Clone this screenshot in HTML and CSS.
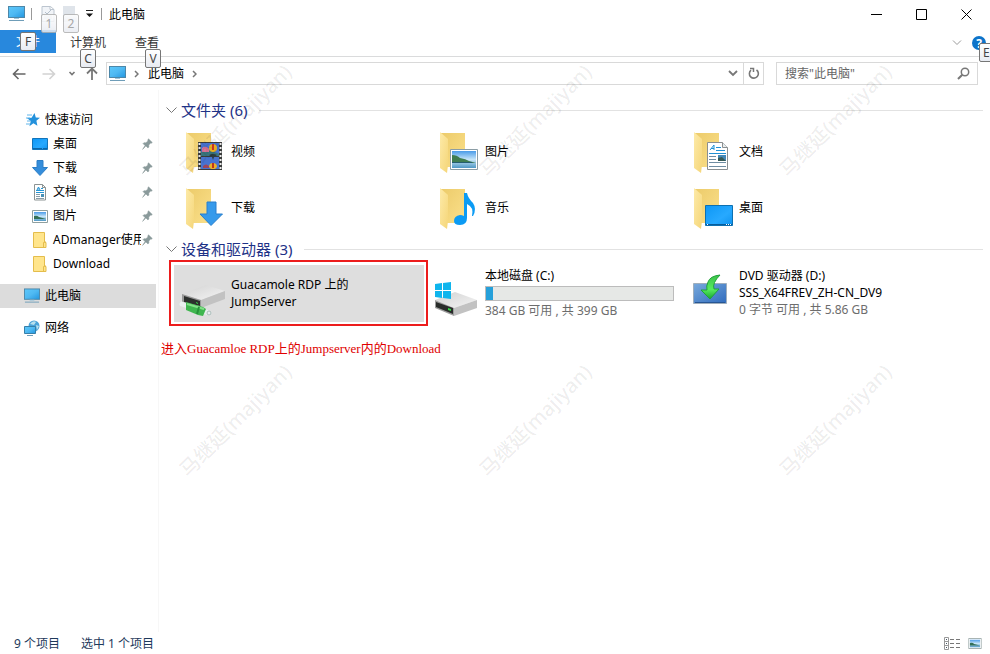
FILE: index.html
```html
<!DOCTYPE html>
<html lang="zh-CN">
<head>
<meta charset="utf-8">
<title>此电脑</title>
<link rel="stylesheet" href="styles.css">
</head>
<body>
<svg class="defs" aria-hidden="true">
  <defs>
    <linearGradient id="screen" x1="0" y1="0" x2="1" y2="1"><stop offset="0" stop-color="#5cc8fb"/><stop offset=".5" stop-color="#4fb9f2"/><stop offset="1" stop-color="#2296e0"/></linearGradient>
    <linearGradient id="back" x1="0" y1="0" x2="1" y2="1"><stop offset="0" stop-color="#eccb6a"/><stop offset="1" stop-color="#fbe08b"/></linearGradient>
    <linearGradient id="flap" x1="0" y1="0" x2="1" y2="1"><stop offset="0" stop-color="#fdeaa8"/><stop offset="1" stop-color="#f5d679"/></linearGradient>
    <linearGradient id="desk" x1="0" y1="0" x2="1" y2="1"><stop offset="0" stop-color="#0d97f5"/><stop offset=".6" stop-color="#27a9ff"/><stop offset="1" stop-color="#0e93ef"/></linearGradient>
    <linearGradient id="metal" x1="0" y1="0" x2="1" y2="1"><stop offset="0" stop-color="#d2d2d2"/><stop offset="1" stop-color="#f4f4f4"/></linearGradient>
    <linearGradient id="sky" x1="0" y1="0" x2="0" y2="1"><stop offset="0" stop-color="#4a9be8"/><stop offset=".5" stop-color="#c6e5f8"/><stop offset="1" stop-color="#4e97c4"/></linearGradient>
    <linearGradient id="green" x1="0" y1="0" x2="0" y2="1"><stop offset="0" stop-color="#3cc24a"/><stop offset=".6" stop-color="#57ec5e"/><stop offset="1" stop-color="#17a632"/></linearGradient>
    <linearGradient id="dvd" x1="0" y1="0" x2="1" y2="1"><stop offset="0" stop-color="#78a9dc"/><stop offset="1" stop-color="#2f6bbd"/></linearGradient>
    <symbol id="pc" viewBox="0 0 17 16"><rect x=".5" y=".5" width="16" height="11" fill="url(#screen)" stroke="#4d87a8"/><path d="M6 12h5v1H6z" fill="#9fc6db"/><path d="M1 14.5h15" stroke="#6f9db8"/></symbol>
    <symbol id="pin" viewBox="0 0 11 12"><path d="M6.5.8l3.8 3.7-1 .7-.7-.1-1.8 2 .1 2-1 .8-2-2L.6 11.4l2.4-3.8-2-2 .9-.9 2 .1 2-1.9-.1-.9z" fill="#8a9a9b" stroke="#8a9a9b" stroke-width=".5"/></symbol>
    <symbol id="folder" viewBox="0 0 38 41"><path d="M1 1h24v34H1z" fill="url(#back)"/><path d="M0 0l8 7v26l-1 8-7-5z" fill="url(#flap)"/></symbol>
    <symbol id="mini" viewBox="0 0 14 16"><path d="M.5.5h11v10l1.500 0v5H.5z" fill="#ffe58c" stroke="#e4bd4c"/><path d="M10.500 15v-4.500l2-1" fill="none" stroke="#e4bd4c"/></symbol>
    <symbol id="doc" viewBox="0 0 14 17"><path d="M1.500.5h8l3 3v12.500h-11z" fill="#fff" stroke="#8b9393"/><path d="M9.500.5v3h3" fill="none" stroke="#8b9393"/><path d="M4 6l1.500-3L7 6M4.500 5h2M8 4.500h2M3 6.500h8M3 8.500h8" fill="none" stroke="#2695d4"/><path d="M3 10.500h4M3 12.500h4M3 14.500h8" stroke="#879ca8"/><path d="M8 10h3v3H8z" fill="#4990b5"/></symbol>
    <symbol id="photo" viewBox="0 0 16 13"><path d="M.5.5h15v12H.5z" fill="#fff" stroke="#8f9f9f"/><path d="M2 2h12v9H2z" fill="url(#sky)"/><path d="M2 6q3-1 5 1l7 2H2z" fill="#347057"/></symbol>
  </defs>
</svg>

<header class="titlebar">
  <svg class="app" width="17" height="16"><use href="#pc"/></svg>
  <span class="sep"></span>
  <button class="quick" aria-label="属性"><svg width="14" height="16" viewBox="0 0 14 16"><path d="M1 .5h8.500l3.500 3v12H1zM9 .5v3h4" fill="#f1f4f8" stroke="#bcc5cf"/><path d="M4 6l2 2 4-4M3 10h8M3 12h8" fill="none" stroke="#b4bfca"/></svg><kbd class="tip dim">1</kbd></button>
  <button class="quick" aria-label="新建文件夹"><svg width="14" height="16" viewBox="0 0 14 16"><path d="M0 0h12v9h2v7H0z" fill="#dfe4ea"/></svg><kbd class="tip dim">2</kbd></button>
  <button class="more" aria-label="自定义"><svg width="9" height="8" viewBox="0 0 9 8"><path d="M1 .5h7" stroke="#222"/><path d="M1 3.500h7L4.500 7z" fill="#111"/></svg></button>
  <span class="sep"></span>
  <h1>此电脑</h1>
  <div class="window">
    <button aria-label="最小化"><svg width="11" height="11"><path d="M0 5.500h11" stroke="#000"/></svg></button>
    <button aria-label="最大化"><svg width="11" height="11"><path d="M.5.5h10v10H.5z" fill="none" stroke="#000"/></svg></button>
    <button aria-label="关闭"><svg width="11" height="11"><path d="M.5.5l10 10m0-10l-10 10" stroke="#000"/></svg></button>
  </div>
</header>

<nav class="tabs">
  <button class="tab file">文件<kbd class="tip">F</kbd></button>
  <button class="tab">计算机<kbd class="tip low">C</kbd></button>
  <button class="tab">查看<kbd class="tip low">V</kbd></button>
  <div class="help">
    <svg width="10" height="6" viewBox="0 0 10 6"><path d="M1 .5l4 4 4-4" fill="none" stroke="#999"/></svg>
    <button class="question" aria-label="帮助">?<kbd class="tip edge">E</kbd></button>
  </div>
</nav>

<div class="address">
  <button class="nav" aria-label="后退"><svg width="14" height="12" viewBox="0 0 14 12"><path d="M13.500 6H1.500M6.500 1l-5 5 5 5" fill="none" stroke="#666" stroke-width="1.600"/></svg></button>
  <button class="nav" aria-label="前进"><svg width="14" height="12" viewBox="0 0 14 12"><path d="M.5 6h12M7.500 1l5 5-5 5" fill="none" stroke="#d2d2d2" stroke-width="1.600"/></svg></button>
  <button class="nav recent" aria-label="最近浏览"><svg width="8" height="6" viewBox="0 0 8 6"><path d="M1.500 1L4 3.500 6.500 1" fill="none" stroke="#777" stroke-width="1.600"/></svg></button>
  <button class="nav up" aria-label="上移"><svg width="12" height="13" viewBox="0 0 12 13"><path d="M6 13V1.500M1 6.500l5-5 5 5" fill="none" stroke="#777" stroke-width="1.800"/></svg></button>
  <div class="path">
    <svg width="17" height="16"><use href="#pc"/></svg>
    <svg class="arrow" width="5" height="8" viewBox="0 0 5 8"><path d="M1 1l3 3-3 3" fill="none" stroke="#777" stroke-width="1.500"/></svg>
    <a href="#">此电脑</a>
    <svg class="arrow" width="5" height="8" viewBox="0 0 5 8"><path d="M1 1l3 3-3 3" fill="none" stroke="#777" stroke-width="1.500"/></svg>
    <button class="drop" aria-label="历史"><svg width="10" height="7" viewBox="0 0 10 7"><path d="M1 1l4 4 4-4" fill="none" stroke="#777" stroke-width="1.800"/></svg></button>
    <button class="refresh" aria-label="刷新"><svg width="12" height="13" viewBox="0 0 12 13"><path d="M8.500 3A4.500 4.500 0 1 1 3 3.200" fill="none" stroke="#777" stroke-width="1.600"/><path d="M2 1.500h3.500V5" fill="none" stroke="#777" stroke-width="1.500"/></svg></button>
  </div>
  <form class="search">
    <input type="text" aria-label="搜索" placeholder="搜索&quot;此电脑&quot;">
    <svg width="13" height="13" viewBox="0 0 13 13"><circle cx="8" cy="5" r="3.700" fill="none" stroke="#777" stroke-width="1.500"/><path d="M5.300 7.700L1 12" stroke="#777" stroke-width="2"/></svg>
  </form>
</div>

<div class="body">
  <aside class="sidebar">
    <ul>
      <li><a href="#"><svg width="16" height="16" viewBox="0 0 16 16"><path d="M10.500 1l1.300 4.500 4.200.3-3.600 3 1 5-4-2.500-4 3 1.400-5L3 6l4.600-.3z" fill="#2391dc"/><path d="M3 3h5M2 6h4M3 9h4M2 12h4" stroke="#61b5ea"/></svg><span>快速访问</span></a></li>
      <li class="sub"><a href="#"><svg width="16" height="16" viewBox="0 0 16 16"><path d="M.5 2.500h15v11H.5z" fill="url(#desk)" stroke="#1274ba"/><path d="M1 12.500h14" stroke="#0b66a8" stroke-dasharray="9 1"/></svg><span>桌面</span></a><svg class="pin" width="11" height="12"><use href="#pin"/></svg></li>
      <li class="sub"><a href="#"><svg width="16" height="16" viewBox="0 0 16 16"><path d="M5 .5h6v7h4.500L8 15.500.5 7.500H5z" fill="#348ddb" stroke="#2c7ec6"/></svg><span>下载</span></a><svg class="pin" width="11" height="12"><use href="#pin"/></svg></li>
      <li class="sub"><a href="#"><svg width="16" height="17"><use href="#doc"/></svg><span>文档</span></a><svg class="pin" width="11" height="12"><use href="#pin"/></svg></li>
      <li class="sub"><a href="#"><svg width="16" height="13"><use href="#photo"/></svg><span>图片</span></a><svg class="pin" width="11" height="12"><use href="#pin"/></svg></li>
      <li class="sub"><a href="#"><svg width="16" height="16"><use href="#mini"/></svg><span>ADmanager使用</span></a><svg class="pin" width="11" height="12"><use href="#pin"/></svg></li>
      <li class="sub"><a href="#"><svg width="16" height="16"><use href="#mini"/></svg><span>Download</span></a></li>
      <li class="root current"><a href="#"><svg width="16" height="16"><use href="#pc"/></svg><span>此电脑</span></a></li>
      <li class="root"><a href="#"><svg width="16" height="16" viewBox="0 0 16 16"><circle cx="10" cy="6" r="5.500" fill="#4aa3d8"/><path d="M6 4q3-4 6-2l-2 3zM12 5l3 1-2 4z" fill="#b7e0ee"/><path d="M.5 6.500h11v7H.5z" fill="url(#screen)" stroke="#367fa9"/><path d="M3 15.500h6" stroke="#6f9db8"/></svg><span>网络</span></a></li>
    </ul>
  </aside>

  <main class="content">
    <section>
      <h2><svg width="11" height="7" viewBox="0 0 11 7"><path d="M.5.5l5 5 5-5" fill="none" stroke="#777"/></svg>文件夹 (6)</h2>
      <div class="grid">
        <a class="tile" href="#"><svg width="57" height="56" viewBox="0 0 57 56"><use href="#folder" x="12" y="8" width="38" height="41"/><path d="M24 18h24v28H24z" fill="#3b3d3c"/><path d="M27 19h18v13H27zM27 33h18v12H27z" fill="#4773cf"/><path d="M27 28q7-4 18 2v2H27z" fill="#39747c"/><path d="M28 24q4-3 7 1v3h-7z" fill="#d77496"/><circle cx="39" cy="24" r="4" fill="#e7ae22"/><path d="M38 20h2v6h-2z" fill="#cc3425"/><path d="M35 31q4-2 8 0l-3 2-1 3-1-3z" fill="#2c3a3c"/><path d="M35 43q0-4 4-4t4 4l-2 2h-4z" fill="#eaaf26"/><path d="M38 39h2v5h-2z" fill="#be351f"/><path d="M29 42q3-3 6 0v2h-6z" fill="#9d465b"/><path d="M25.500 19v27M46.500 19v27" stroke="#eee" stroke-width="2" stroke-dasharray="2 2"/></svg><span>视频</span></a>
        <a class="tile" href="#"><svg width="57" height="56" viewBox="0 0 57 56"><use href="#folder" x="12" y="8" width="38" height="41"/><path d="M22.500 25.500h27v20h-27z" fill="#fff" stroke="#8b9da5"/><path d="M24 27h24v17H24z" fill="url(#sky)"/><path d="M24 31q5 0 8 3 6 1 9 3l7 2H24z" fill="#3f7d51"/><path d="M24 38h20v1H24z" fill="#245d70"/></svg><span>图片</span></a>
        <a class="tile" href="#"><svg width="57" height="56" viewBox="0 0 57 56"><use href="#folder" x="12" y="8" width="38" height="41"/><path d="M25.500 18.500h15l5 5v22h-20z" fill="#fff" stroke="#8a8f91"/><path d="M40.500 18.500v5h5" fill="#e8edef" stroke="#8a8f91"/><path d="M28 26l4-5v5M29 24.500h3M34 23.500h5M34 26.500h9M27 29.500h17" fill="none" stroke="#2191d5"/><path d="M27 32.500h7M27 35.500h7M27 38.500h17M27 42.500h17" stroke="#6f8da2"/><path d="M36 31h8v6h-8z" fill="#4388b7"/><path d="M36 34l4-1 4 4h-8z" fill="#365955"/></svg><span>文档</span></a>
        <a class="tile" href="#"><svg width="57" height="56" viewBox="0 0 57 56"><use href="#folder" x="12" y="8" width="38" height="41"/><path d="M33 22h9v12h6.500L37 45.500 26 34h7z" fill="#369aeb" stroke="#287fcd"/></svg><span>下载</span></a>
        <a class="tile" href="#"><svg width="57" height="56" viewBox="0 0 57 56"><use href="#folder" x="12" y="8" width="38" height="41"/><path d="M36 13h3q1 5 6 10 4 6 0 13h-1q2-9-5-12v14q0 7-7 7-6 0-6-4 0-5 6-6 2 0 4 1z" fill="#0b9bf4"/></svg><span>音乐</span></a>
        <a class="tile" href="#"><svg width="57" height="56" viewBox="0 0 57 56"><use href="#folder" x="12" y="8" width="38" height="41"/><path d="M23.500 25.500h27v20h-27z" fill="url(#desk)" stroke="#0d70b1"/><path d="M24 44.500h26" stroke="#075c9b"/><path d="M25 44.500h1M44 44.500h5" stroke="#fff" stroke-dasharray="1 1"/></svg><span>桌面</span></a>
      </div>
    </section>

    <section>
      <h2><svg width="11" height="7" viewBox="0 0 11 7"><path d="M.5.5l5 5 5-5" fill="none" stroke="#777"/></svg>设备和驱动器 (3)</h2>
      <div class="grid drives">
        <a class="tile selected" href="#"><svg width="57" height="56" viewBox="0 0 57 56"><path d="M8 28l24-9 19 6-24 9z" fill="url(#metal)"/><path d="M27 34l24-9v8L27 42z" fill="#c2c2c2"/><path d="M8 28l19 6v8L8 37z" fill="#999"/><path d="M10 30l16 5v5l-16-4z" fill="#2c2f2d"/><path d="M22 36l2 1v1l-2-1z" fill="#35da46"/><path d="M8 38l27 9" stroke="#e9efef" stroke-width="5" stroke-linecap="round"/><path d="M12 36l17 5 3 2-3 7-5-1-12-5z" fill="#3fb64f"/><path d="M13 38l17 5" stroke="#82e088" stroke-width="2"/><path d="M25 41l-2 7" stroke="#27903a" stroke-width="2"/><circle cx="35" cy="47" r="2" fill="#e8eeee" stroke="#aabbb8"/></svg><span>Guacamole RDP 上的<br>JumpServer</span></a>
        <a class="tile" href="#"><svg width="57" height="56" viewBox="0 0 57 56"><path d="M7 34l20-8 22 8-23 8z" fill="url(#metal)"/><path d="M26 42l23-8v8L26 50z" fill="#c2c2c2"/><path d="M7 34l19 8v8L7 42z" fill="#9d9d9d"/><path d="M8 36l17 6v6L8 41z" fill="#292c2a"/><path d="M20 42l3 1v2l-3-1z" fill="#35da46"/><path d="M7 18l7-1v7H7zM15 17l8-1v8h-8zM7 25h7v7l-7-1zM15 25h8v8l-8-1z" fill="#0fb5ed"/></svg><span>本地磁盘 (C:)<span class="space" role="meter" aria-label="已用空间" aria-valuemin="0" aria-valuemax="399" aria-valuenow="15"><i style="width:4%"></i></span><small>384 GB 可用 , 共 399 GB</small></span></a>
        <a class="tile" href="#"><svg width="57" height="56" viewBox="0 0 57 56"><path d="M11.500 17.500h33v20h-33z" fill="url(#dvd)" stroke="#9faebc"/><path d="M13 36.500h30" stroke="#275694"/><path d="M38 9q-10 1-12 7-2 4-1 8h-6l9 9 9-10h-5q-2-6 6-14z" fill="url(#green)" stroke="#20a13a"/></svg><span>DVD 驱动器 (D:)<br>SSS_X64FREV_ZH-CN_DV9<small>0 字节 可用 , 共 5.86 GB</small></span></a>
      </div>
    </section>
    <p class="note">进入Guacamloe RDP上的Jumpserver内的Download</p>
  </main>
</div>

<footer class="status">
  <span>9 个项目</span><span>选中 1 个项目</span>
  <div class="views">
    <button aria-label="详细信息"><svg width="17" height="13" viewBox="0 0 17 13"><path d="M.5.5h4v12h-4zM.5 4.500h4M.5 8.500h4" fill="none" stroke="#999"/><path d="M2 2.500h1M2 6.500h1M2 10.500h1" stroke="#456"/><path d="M6 2.500h10M6 6.500h10M6 10.500h10" stroke="#777" stroke-dasharray="4 2"/></svg></button>
    <button aria-label="大图标"><svg width="14" height="11" viewBox="0 0 16 13"><use href="#photo" width="16" height="13"/></svg></button>
  </div>
</footer>

<div class="marks" aria-hidden="true">
  <span>马继延(majiyan)</span><span>马继延(majiyan)</span><span>马继延(majiyan)</span>
  <span>马继延(majiyan)</span><span>马继延(majiyan)</span><span>马继延(majiyan)</span>
</div>
</body>
</html>
```
FILE: styles.css
```css
* { box-sizing: border-box; }
body {
  margin: 0;
  min-height: 100vh;
  display: flex;
  flex-direction: column;
  position: relative;
  overflow: hidden;
  background: #fff;
  color: #000;
  font: 12px/17px "Noto Sans", "Noto Sans CJK SC", sans-serif;
}
svg { display: block; flex: none; }
button {
  display: flex;
  align-items: center;
  justify-content: center;
  padding: 0;
  border: 0;
  background: none;
  color: inherit;
  font: inherit;
}
a { color: inherit; text-decoration: none; }
.defs { position: absolute; width: 0; height: 0; }

.titlebar { display: flex; align-items: center; height: 30px; padding: 0 0 2px 8px; }
.titlebar h1 { margin: 0 0 0 7px; font-size: 12px; font-weight: 400; }
.sep { width: 1px; height: 12px; background: #999; }
.app + .sep { margin: 0 9px 0 6px; }
.quick { position: relative; width: 14px; margin-right: 8px; }
.more { width: 9px; margin-right: 7px; }
.window { display: flex; margin-left: auto; padding-right: 1px; }
.window button { width: 45px; height: 28px; }

.tip {
  position: absolute;
  z-index: 2;
  width: 16px;
  height: 19px;
  border: 1px solid #767676;
  border-radius: 2px;
  background: linear-gradient(#fff, #e8ebf2);
  color: #444;
  font: 12px/17px "Noto Sans", sans-serif;
  text-align: center;
}
.tip.dim { top: 8px; left: 0; border-color: #b0b0b0; color: #999; opacity: .85; }
.tip.low { top: 19px; left: 10px; }
.tip.edge { top: 7px; left: 7px; text-align: left; padding-left: 3px; }

.tabs { display: flex; height: 27px; border-bottom: 1px solid #dadbdc; }
.tab { position: relative; height: 24px; margin-left: 14px; padding-right: 15px; color: #333; }
.tab.file { width: 56px; height: 23px; margin: 0; padding: 0; background: #2888dd; color: #fff; }
.file .tip { top: 2px; left: 20px; }
.help { display: flex; align-items: center; gap: 10px; margin-left: auto; padding-right: 4px; }
.question {
  position: relative;
  width: 14px;
  height: 14px;
  border-radius: 50%;
  background: #0d74ca;
  color: #fff;
  font-weight: 700;
}

.address { display: flex; align-items: center; height: 33px; padding: 0 12px; }
.nav { margin-right: 16px; }
.nav.recent { margin: 0 10px 0 -4px; }
.nav.up { margin-right: 8px; }
.path, .search { display: flex; align-items: center; height: 23px; border: 1px solid #d9d9d9; }
.path { flex: 1; padding-left: 2px; }
.path .arrow { margin: 0 8px; }
.path a { margin-left: 1px; }
.drop { width: 20px; height: 21px; margin-left: auto; }
.refresh { width: 20px; height: 21px; border-left: 1px solid #d9d9d9; }
.search { width: 202px; margin-left: 12px; padding: 0 7px 0 8px; }
.search input {
  flex: 1;
  min-width: 0;
  padding: 0;
  border: 0;
  outline: 0;
  background: none;
  font: inherit;
}
.search input::placeholder { color: #666; opacity: 1; }

.body { display: flex; flex: 1; }
.sidebar { width: 159px; padding-top: 18px; border-right: 1px solid #f7f7f7; }
.sidebar ul { margin: 0; padding: 0; list-style: none; }
.sidebar li { display: flex; align-items: center; height: 24px; margin-right: 2px; padding: 0 3px 0 24px; }
.sidebar li.sub { padding-left: 32px; }
.sidebar li.root { margin-top: 8px; }
.sidebar li.current { background: #dcdcdc; }
.sidebar a { display: flex; flex: 1; align-items: center; gap: 5px; min-width: 0; overflow: hidden; white-space: nowrap; }
.sidebar a span { padding-bottom: 1px; }
.pin { margin-left: 1px; }

.content { flex: 1; min-width: 0; padding: 8px 7px 0; }
h2 {
  display: flex;
  align-items: center;
  gap: 4px;
  height: 26px;
  margin: 0;
  padding-bottom: 1px;
  color: #1e3287;
  font-size: 15px;
  font-weight: 400;
}
h2::after { content: ""; flex: 1; height: 1px; margin-left: 8px; background: #e2e2e2; }
.grid { display: grid; grid-template-columns: repeat(auto-fill, 250px); column-gap: 4px; padding-left: 8px; }
.tile { position: relative; display: flex; align-items: center; height: 56px; }
.tile > span { padding-bottom: 2px; }
section + section { margin-top: 1px; }
.drives { padding-top: 2px; }
.drives .tile { height: 57px; }
.selected { background: #dedede; }
.selected::after { content: ""; position: absolute; inset: -5px -4px -4px -5px; border: 2px solid #ec1c1c; }
.tile small { display: block; color: #6d6d6d; font-size: 12px; }
.space {
  display: block;
  width: 189px;
  height: 15px;
  margin: 2px 0 1px;
  border: 1px solid #bcbcbc;
  background: #e6e8e6;
}
.space i { display: block; height: 100%; background: #26a0da; }
.note { margin: 18px 0 0 -5px; color: #e00000; font: 13px/18px "Liberation Serif", "Noto Sans CJK SC", serif; }

.status { display: flex; align-items: center; gap: 21px; height: 22px; padding: 0 8px 0 14px; color: #1e395b; }
.views { display: flex; align-items: center; gap: 7px; margin-left: auto; }

.marks {
  position: absolute;
  top: -30px;
  left: 85px;
  display: grid;
  grid-template-columns: repeat(3, 300px);
  grid-auto-rows: 300px;
  place-items: center;
  color: rgba(0, 0, 0, .08);
  font-size: 20px;
  font-weight: 500;
  pointer-events: none;
}
.marks span { transform: rotate(-45deg); white-space: nowrap; }
```
